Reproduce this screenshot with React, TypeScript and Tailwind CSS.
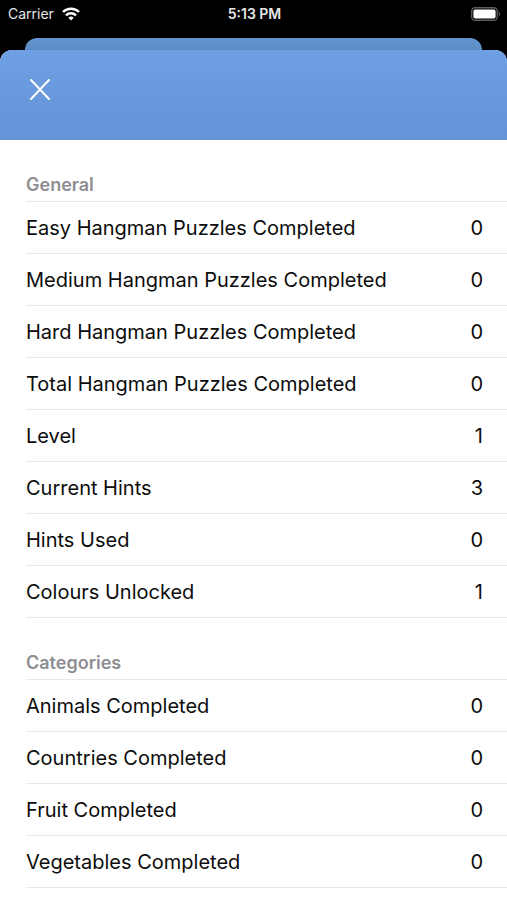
import React from "react";

interface Stat {
  label: string;
  value: number;
}

interface StatSection {
  title: string;
  stats: Stat[];
}

const sections: StatSection[] = [
  {
    title: "General",
    stats: [
      { label: "Easy Hangman Puzzles Completed", value: 0 },
      { label: "Medium Hangman Puzzles Completed", value: 0 },
      { label: "Hard Hangman Puzzles Completed", value: 0 },
      { label: "Total Hangman Puzzles Completed", value: 0 },
      { label: "Level", value: 1 },
      { label: "Current Hints", value: 3 },
      { label: "Hints Used", value: 0 },
      { label: "Colours Unlocked", value: 1 },
    ],
  },
  {
    title: "Categories",
    stats: [
      { label: "Animals Completed", value: 0 },
      { label: "Countries Completed", value: 0 },
      { label: "Fruit Completed", value: 0 },
      { label: "Vegetables Completed", value: 0 },
    ],
  },
];

const StatusBar: React.FC = () => (
  <div className="grid h-7 grid-cols-3 items-center pr-1.5 pl-2 text-sm text-[#e6e6e6]">
    <div className="flex items-center gap-2">
      <span>Carrier</span>
      <svg
        width="18"
        height="14"
        viewBox="0 0 18 14"
        fill="none"
        stroke="#fff"
        strokeWidth="2.4"
      >
        <path d="M1 5a11.3 11.3 0 0 1 16 0" />
        <path d="M4 8.3a7.1 7.1 0 0 1 10 0" />
        <path
          d="M9 13.4l-2.6-2.7a3.7 3.7 0 0 1 5.2 0z"
          fill="#fff"
          stroke="none"
        />
      </svg>
    </div>
    <span className="text-center font-semibold">5:13 PM</span>
    <svg
      className="justify-self-end"
      width="30"
      height="14"
      viewBox="0 0 30 14"
    >
      <rect
        x="0.7"
        y="0.7"
        width="25.6"
        height="12.6"
        rx="3.6"
        fill="none"
        stroke="#5c5c5c"
        strokeWidth="1.4"
      />
      <rect x="2.4" y="2.4" width="22.2" height="9.2" rx="2" fill="#fff" />
      <path d="M27.8 4.8c1.8.6 1.8 3.8 0 4.4z" fill="#5c5c5c" />
    </svg>
  </div>
);

const App: React.FC = () => {
  return (
    <div className="flex min-h-screen flex-col bg-black font-['Inter',sans-serif]">
      <StatusBar />
      {/* edge of the screen behind the sheet */}
      <div className="mx-[25px] mt-2.5 h-3 rounded-t-xl bg-linear-to-b from-[#6394cf] to-[#5e8dc6]" />
      <main className="flex-1 overflow-hidden rounded-t-xl bg-white">
        <header className="flex h-[90px] items-start bg-linear-to-b from-[#6f9fe4] to-[#6494d7] px-[26px] pt-6">
          <button type="button" aria-label="Close" className="p-1 text-white">
            <svg
              width="20"
              height="22"
              viewBox="0 0 20 22"
              fill="none"
              stroke="currentColor"
              strokeWidth="2"
              strokeLinecap="round"
            >
              <path d="M1 2l18 19M19 2L1 21" />
            </svg>
          </button>
        </header>
        {sections.map((section) => (
          <section key={section.title} className="pl-[26px]">
            <h2 className="flex h-[62px] items-end border-b border-[#e9e9ea] pb-0.5 text-lg font-semibold text-[#8e8e92]">
              {section.title}
            </h2>
            <dl>
              {section.stats.map((stat) => (
                <div
                  key={stat.label}
                  className="flex h-[52px] items-center justify-between border-b border-[#e9e9ea] pr-6 text-xl text-[#0c0c0c]"
                >
                  <dt>{stat.label}</dt>
                  <dd>{stat.value}</dd>
                </div>
              ))}
            </dl>
          </section>
        ))}
      </main>
    </div>
  );
};

export default App;
